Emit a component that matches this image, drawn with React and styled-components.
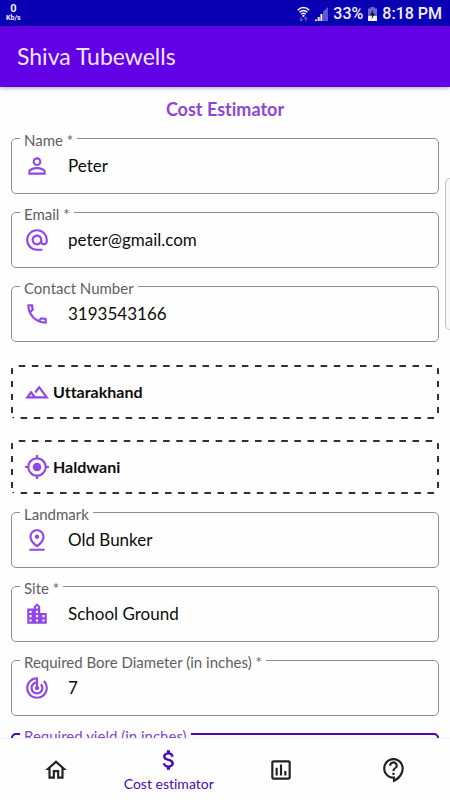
import { useState } from "react";
import styled, { createGlobalStyle } from "styled-components";
import {
  MdAlternateEmail,
  MdAttachMoney,
  MdLocationCity,
  MdMyLocation,
  MdOutlineAssessment,
  MdOutlineCall,
  MdOutlineContactSupport,
  MdOutlineHome,
  MdOutlineLandscape,
  MdOutlinePinDrop,
  MdPersonOutline,
  MdTrackChanges,
} from "react-icons/md";

const GlobalStyle = createGlobalStyle`
  * {
    box-sizing: border-box;
  }
  body {
    margin: 0;
    background: #fefefe;
    font-family: Lato, "Liberation Sans", sans-serif;
    font-variant-ligatures: none;
  }
  button, input {
    font-family: inherit;
    font-variant-ligatures: none;
  }
`;

const Screen = styled.div`
  position: relative;
  display: flex;
  flex-direction: column;
  height: 100vh;
  overflow: hidden;
`;

const StatusBar = styled.div`
  display: flex;
  justify-content: space-between;
  align-items: center;
  flex-shrink: 0;
  height: 26px;
  padding: 0 8px 0 6px;
  background: #0900b4;
  color: #f4f2ff;
  font-family: Roboto, sans-serif;
`;

const Speed = styled.div`
  display: flex;
  flex-direction: column;
  align-items: center;
  font-size: 7px;
  font-weight: 700;
  line-height: 8px;
`;

const SpeedValue = styled.span`
  font-size: 11px;
  line-height: 10px;
`;

const StatusGroup = styled.div`
  display: flex;
  align-items: center;
  gap: 5px;
  padding-top: 2px;
  font-size: 16px;
  font-weight: 500;
  line-height: 20px;
`;

const AppBar = styled.header`
  flex-shrink: 0;
  padding: 16px 17px;
  background: #6200e6;
  box-shadow: 0 1px 4px rgba(0, 0, 0, 0.35);
  z-index: 1;
`;

const AppTitle = styled.h1`
  margin: 0;
  color: #f1e6ff;
  font-size: 23px;
  font-weight: 400;
  line-height: 29px;
`;

const Form = styled.form`
  display: flex;
  flex-direction: column;
  gap: 8px;
  flex: 1;
  min-height: 0;
  padding: 11px 11px 0;
  overflow: hidden;
`;

const FormTitle = styled.h2`
  margin: 0;
  color: #8c48d4;
  font-size: 18px;
  font-weight: 700;
  line-height: 22px;
  text-align: center;
`;

const Outline = styled.fieldset`
  flex-shrink: 0;
  min-width: 0;
  margin: 0;
  padding: ${(props) => (props.$active ? "0 7px 8px" : "0 8px 9px")};
  border: ${(props) => (props.$active ? "2px solid #4b06b0" : "1px solid #8e8e8e")};
  border-radius: 5px;
`;

const Legend = styled.legend`
  height: 20px;
  padding: 4px 4px 0;
  color: ${(props) => (props.$active ? "#8048c8" : "#606060")};
  font-size: 15px;
  line-height: 16px;
`;

const FieldRow = styled.div`
  display: flex;
  align-items: center;
  gap: 18px;
  height: 36px;
  padding: 0 4px;
  color: #9147e3;
`;

const Input = styled.input`
  flex: 1;
  min-width: 0;
  padding: 0;
  border: 0;
  outline: 0;
  background: transparent;
  color: #0c0c0c;
  font-size: 17px;
  line-height: 24px;
`;

const Pickers = styled.div`
  display: flex;
  flex-direction: column;
  gap: 21px;
  padding-top: 15px;
`;

// long dashes, the native dashed border makes them too short
const Picker = styled.button`
  display: flex;
  align-items: center;
  gap: 3px;
  height: 54px;
  padding: 0 9px;
  border: solid transparent;
  border-width: 0 4px;
  border-radius: 5px;
  background:
    linear-gradient(90deg, transparent 4px, #303030 4px 10px, transparent 10px) 0 0 / 13px 2px round no-repeat,
    linear-gradient(90deg, transparent 6px, #303030 6px 12px, transparent 12px) 0 100% / 13px 2px round no-repeat,
    linear-gradient(transparent 3px, #303030 3px 9px, transparent 9px) 0 0 / 2px 13px no-repeat repeat,
    linear-gradient(transparent 3px, #303030 3px 9px, transparent 9px) 100% 0 / 2px 13px no-repeat repeat;
  background-origin: padding-box, padding-box, border-box, border-box;
  background-clip: border-box;
  color: #9147e3;
`;

const PickerText = styled.span`
  color: #0c0c0c;
  font-size: 16px;
  font-weight: 700;
  line-height: 24px;
`;

const EdgeHandle = styled.div`
  position: absolute;
  top: 178px;
  right: 0;
  width: 5px;
  height: 152px;
  border: 1px solid #c4c4c4;
  border-right: 0;
  border-radius: 5px 0 0 5px;
  background: #f8f8f8;
`;

const BottomNav = styled.nav`
  display: grid;
  grid-template-columns: repeat(4, 1fr);
  flex-shrink: 0;
  height: 62px;
  border-top: 1px solid #f4f0f8;
  background: #fefefe;
`;

const NavItem = styled.button`
  display: flex;
  flex-direction: column;
  align-items: center;
  justify-content: center;
  gap: 2px;
  padding: 0;
  border: 0;
  background: transparent;
  color: ${(props) => (props.$active ? "#4a08b0" : "#222")};
  font-size: 14px;
  line-height: 18px;
  white-space: nowrap;
`;

const Field = ({ id, label, value, icon: Icon, active }) => {
  const [text, setText] = useState(value);
  return (
    <Outline $active={active}>
      <Legend $active={active}>
        <label htmlFor={id}>{label}</label>
      </Legend>
      <FieldRow>
        {Icon && <Icon size={26} />}
        <Input id={id} value={text} onChange={(e) => setText(e.target.value)} />
      </FieldRow>
    </Outline>
  );
};

const WifiIcon = () => (
  <svg width="13" height="16" viewBox="0 0 13 16" fill="none" stroke="#f4f2ff">
    <path d="M.8 4.2C4 .6 9 .6 12.2 4.2M2.6 6.3c2.2-2.4 5.6-2.4 7.8 0M4.4 8.3c1.2-1.3 3-1.3 4.2 0" strokeWidth="1.5" />
    <circle cx="6.5" cy="9.9" r="1.1" fill="#f4f2ff" stroke="none" />
    <path d="M4.2 11v4M2.8 13.3l1.4 1.7 1.4-1.7M8.8 15.2v-4M7.4 12.8l1.4-1.7 1.4 1.7" stroke="#6d68d6" />
  </svg>
);

const SignalIcon = () => (
  <svg width="13" height="14" viewBox="0 0 13 14">
    <path d="M8 14V4.6L13 0v14z" fill="#5f5ace" />
    <path d="M0 14v-1.5h2V14zM2.7 14v-4h2v4zM5.4 14V7h2v7z" fill="#f4f2ff" />
  </svg>
);

const BatteryIcon = () => (
  <svg width="9" height="14" viewBox="0 0 9 14">
    <path d="M2.5 0h4v1.5H9V9H0V1.5h2.5z" fill="#6e69d2" />
    <path d="M0 9h9v5H0z" fill="#f4f2ff" />
    <path d="M5.2 2.5L2 8h2.2l-.6 4L7 6.6H4.8z" fill="#111" />
  </svg>
);

const App = () => {
  return (
    <Screen>
      <GlobalStyle />
      <StatusBar>
        <Speed>
          <SpeedValue>0</SpeedValue>
          Kb/s
        </Speed>
        <StatusGroup>
          <WifiIcon />
          <SignalIcon />
          <span>33%</span>
          <BatteryIcon />
          <span>8:18 PM</span>
        </StatusGroup>
      </StatusBar>
      <AppBar>
        <AppTitle>Shiva Tubewells</AppTitle>
      </AppBar>
      <Form>
        <FormTitle>Cost Estimator</FormTitle>
        <Field id="name" label="Name *" value="Peter" icon={MdPersonOutline} />
        <Field id="email" label="Email *" value="peter@gmail.com" icon={MdAlternateEmail} />
        <Field id="contact" label="Contact Number" value="3193543166" icon={MdOutlineCall} />
        <Pickers>
          <Picker type="button">
            <MdOutlineLandscape size={26} />
            <PickerText>Uttarakhand</PickerText>
          </Picker>
          <Picker type="button">
            <MdMyLocation size={26} />
            <PickerText>Haldwani</PickerText>
          </Picker>
        </Pickers>
        <Field id="landmark" label="Landmark" value="Old Bunker" icon={MdOutlinePinDrop} />
        <Field id="site" label="Site *" value="School Ground" icon={MdLocationCity} />
        <Field id="diameter" label="Required Bore Diameter (in inches) *" value="7" icon={MdTrackChanges} />
        <Field id="yield" label="Required yield (in inches)" value="" active />
      </Form>
      <BottomNav>
        <NavItem type="button" aria-label="Home">
          <MdOutlineHome size={26} />
        </NavItem>
        <NavItem type="button" $active>
          <MdAttachMoney size={26} />
          Cost estimator
        </NavItem>
        <NavItem type="button" aria-label="Reports">
          <MdOutlineAssessment size={26} />
        </NavItem>
        <NavItem type="button" aria-label="Support">
          <MdOutlineContactSupport size={26} />
        </NavItem>
      </BottomNav>
      <EdgeHandle />
    </Screen>
  );
};

export default App;
